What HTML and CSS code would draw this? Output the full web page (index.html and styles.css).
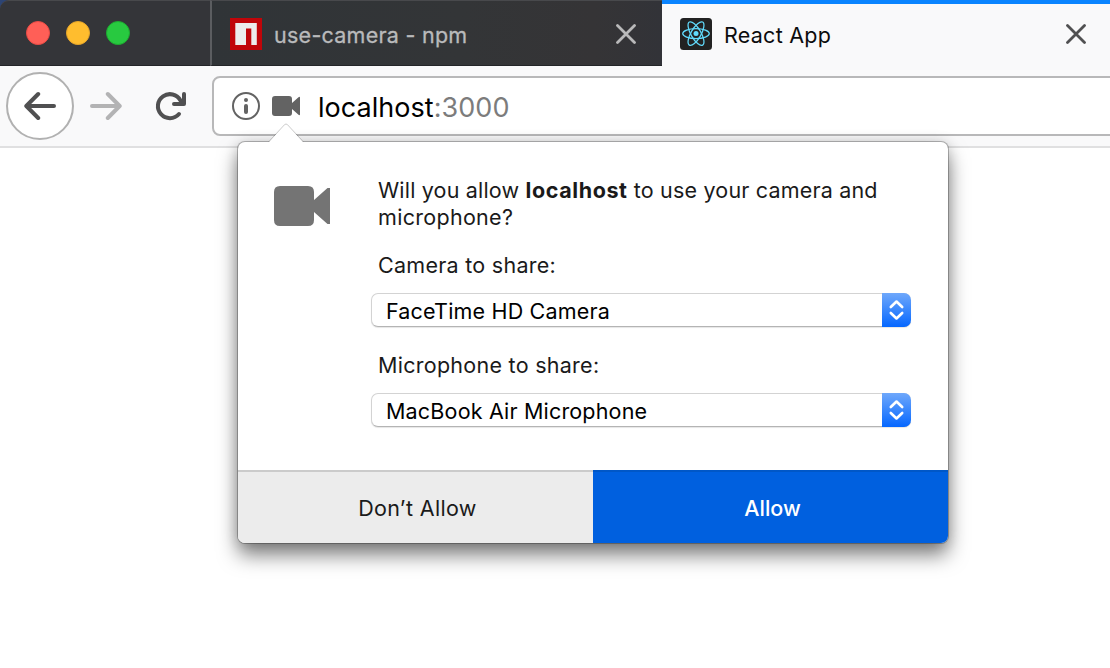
FILE: index.html
```html
<!DOCTYPE html>
<html lang="en">
<head>
<meta charset="utf-8">
<title>React App</title>
<link rel="stylesheet" href="styles.css">
</head>
<body>
<div class="browser">
  <header class="tab-strip">
    <div class="window-controls">
      <span class="dot dot-close"></span>
      <span class="dot dot-minimize"></span>
      <span class="dot dot-zoom"></span>
    </div>
    <div class="tab">
      <svg class="favicon" viewBox="0 0 32 32"><path fill="#c00509" d="M0 0h32v32H0z"/><path fill="#ececec" d="M5.300 5h21.500v22H21.300V10.500H16V27H5.300z"/></svg>
      <span class="tab-title title-npm">use-camera - npm</span>
      <svg class="tab-close" viewBox="0 0 20 20"><path d="M1.500 1.500l17 17M18.500 1.500l-17 17"/></svg>
    </div>
    <div class="tab tab-active">
      <svg class="favicon" viewBox="0 0 32 32"><rect width="32" height="32" rx="3.5" fill="#222"/><g fill="none" stroke="#61dafb" stroke-width="1.25"><ellipse cx="16" cy="15.6" rx="13.3" ry="5"/><ellipse cx="16" cy="15.6" rx="13.3" ry="5" transform="rotate(60 16 15.6)"/><ellipse cx="16" cy="15.6" rx="13.3" ry="5" transform="rotate(120 16 15.6)"/></g><circle cx="16" cy="15.6" r="2.5" fill="#61dafb"/></svg>
      <span class="tab-title title-react">React App</span>
      <svg class="tab-close" viewBox="0 0 20 20"><path d="M1.500 1.500l17 17M18.500 1.500l-17 17"/></svg>
    </div>
  </header>

  <nav class="toolbar">
    <span class="back">
      <svg class="icon" viewBox="0 0 32 32"><path d="M30 16H3M14.200 4L2.300 16 14.200 28"/></svg>
    </span>
    <svg class="icon forward" viewBox="0 0 32 32"><path d="M2 16h27M17.800 4L29.700 16 17.800 28"/></svg>
    <svg class="icon reload" viewBox="0 0 32 32"><path d="M25 24A12 12 0 1 1 26.500 10.500"/><path class="reload-head" d="M30 4V14H20"/><path class="reload-fill" d="M30 7V14H23z"/></svg>
    <div class="url-bar">
      <svg class="info" viewBox="0 0 28 28"><circle cx="14" cy="14" r="13" fill="none" stroke="#636363" stroke-width="2"/><circle cx="14" cy="8" r="2" fill="#636363"/><path d="M14 14v6" stroke="#636363" stroke-width="4" stroke-linecap="round"/></svg>
      <svg class="camera-small" viewBox="0 0 56 40"><path d="M6 0h28q6 0 6 6v8L53 2.500q3-2 3 1v33q0 3-3 1L40 26v8q0 6-6 6H6q-6 0-6-6V6q0-6 6-6z"/></svg>
      <span class="url">localhost<span class="port">:3000</span></span>
    </div>
  </nav>

  <section class="permission-popup">
    <svg class="popup-arrow" viewBox="0 0 36 20"><path d="M0 19h1L16.500 2q1.500-1.500 3 0L35 19h1v1H0z" fill="#fff"/><path d="M1 18.500L16.500 1.700q1.500-1.500 3 0L35 18.500" fill="none" stroke="#000" stroke-opacity=".2"/></svg>
    <div class="popup-body">
      <svg class="camera-large" viewBox="0 0 56 40"><path d="M6 0h28q6 0 6 6v8L53.500 2H56v36h-2.500L40 26v8q0 6-6 6H6q-6 0-6-6V6q0-6 6-6z"/></svg>
      <div class="popup-content">
        <p class="message">Will you allow <b>localhost</b> to use your camera and<br><span class="message-end">microphone?</span></p>
        <div class="label label-camera">Camera to share:</div>
        <div class="select">
          <span class="value value-camera">FaceTime HD Camera</span>
          <svg class="stepper" viewBox="0 0 29 34"><path d="M8.800 14l5.700-5.500L20.200 14M8.800 20l5.700 5.500L20.200 20"/></svg>
        </div>
        <div class="label label-mic">Microphone to share:</div>
        <div class="select">
          <span class="value value-mic">MacBook Air Microphone</span>
          <svg class="stepper" viewBox="0 0 29 34"><path d="M8.800 14l5.700-5.500L20.200 14M8.800 20l5.700 5.500L20.200 20"/></svg>
        </div>
      </div>
    </div>
    <div class="actions">
      <div class="action deny">Don’t Allow</div>
      <div class="action allow">Allow</div>
    </div>
  </section>
</div>
</body>
</html>
```
FILE: styles.css
```css
* { box-sizing: border-box; }

body {
  margin: 0;
  background: #fff;
  font-family: Inter, "Liberation Sans", sans-serif;
  font-size: 21.5px;
  color: #1a1a1a;
}

svg { display: block; flex: none; }

.browser {
  position: relative;
  width: 1110px;
  height: 668px;
  overflow: hidden;
  background: #fff;
}

/* Tabs */
.tab-strip {
  display: flex;
  height: 66px;
  background: #343539;
  border-top-left-radius: 9px;
  box-shadow: -5px -5px 0 #2c4474;
}
.window-controls {
  display: flex;
  gap: 16px;
  width: 210px;
  padding: 20px 0 0 26px;
  border-top: 1px solid #48494c;
  border-top-left-radius: 9px;
  border-bottom: 1px solid #242529;
}
.dot { width: 24px; height: 24px; border-radius: 50%; border: 1px solid; }
.dot-close { background: #ff5f57; border-color: #e94b45; }
.dot-minimize { background: #ffbd2e; border-color: #e5a52a; }
.dot-zoom { background: #28c940; border-color: #1cac2f; }
.tab {
  display: flex;
  align-items: flex-start;
  width: 452px;
  padding: 17px 26px 0 18px;
  border-left: 2px solid #5b5d60;
  border-top: 1px solid #48494c;
  border-bottom: 1px solid #232528;
  background: linear-gradient(90deg, #303437, #333537 55%, #353436 85%, #323338);
  color: #b9babb;
}
.tab-active {
  width: 448px;
  padding: 14px 24px 0 18px;
  border: 0;
  border-top: 4px solid #0a84ff;
  background: #f9f9fa;
  color: #0c0c0d;
}
.favicon { width: 32px; height: 32px; }
.tab-title { margin-left: 12px; line-height: 32px; padding-top: 1px; white-space: nowrap; letter-spacing: .26px; }
.title-npm { -webkit-text-stroke: .3px; }
.tab-close { width: 20px; height: 20px; margin: 6px 0 0 auto; }
.tab-close path { fill: none; stroke: #b9b9ba; stroke-width: 2.8; stroke-linecap: round; }
.tab-active .tab-close path { stroke: #505051; }

/* Navigation */
.toolbar {
  display: flex;
  align-items: flex-start;
  height: 82px;
  padding-left: 6px;
  background: #f9f9fa;
  border-bottom: 2px solid #e0e0e1;
}
.back {
  display: grid;
  place-items: center;
  width: 68px;
  height: 68px;
  margin-top: 6px;
  border: 2px solid #b1b1b1;
  border-radius: 50%;
  background: #fff;
}
.icon { width: 32px; height: 32px; }
.icon path { fill: none; stroke: #505051; stroke-width: 4; stroke-linecap: round; stroke-linejoin: round; }
.forward { margin: 24px 0 0 16px; }
.forward path { stroke: #b3b3b4; }
.reload { margin: 24px 0 0 32px; }
.icon .reload-fill { fill: #505051; stroke: none; }
.url-bar {
  display: flex;
  align-items: center;
  width: 906px;
  height: 60px;
  margin: 10px -10px 0 26px;
  padding-left: 18px;
  border: 2px solid #b8b8b9;
  border-radius: 8px;
  background: #fff;
}
.info { width: 28px; height: 28px; }
.camera-small { width: 28px; height: 20px; margin-left: 12px; fill: #636363; }
.url { margin-left: 18px; padding-top: 2px; font-size: 27px; color: #000; white-space: nowrap; letter-spacing: .04px; }
.port { color: #7c7c7c; }

/* Permission prompt */
.permission-popup {
  position: absolute;
  left: 238px;
  top: 142px;
  width: 710px;
  height: 401px;
  border-radius: 7px;
  background: #fff;
  box-shadow: 0 0 0 1px rgba(0, 0, 0, .25), 0 12px 20px rgba(0, 0, 0, .5), 0 0 14px rgba(0, 0, 0, .16);
}
.popup-arrow { position: absolute; left: 30px; top: -19px; width: 36px; height: 20px; }
.popup-body { display: flex; height: 328px; padding: 35px 37px 0 36px; }
.camera-large { width: 56px; height: 40px; margin-top: 9px; fill: #747474; }
.popup-content { width: 540px; margin-left: 41px; }
.message { margin: 0 0 0 7px; line-height: 27px; white-space: nowrap; letter-spacing: .18px; }
.message b { letter-spacing: .6px; }
.message-end { letter-spacing: .3px; }
.label { margin: 21px 0 0 7px; line-height: 27px; letter-spacing: .27px; }
.label-mic { margin-top: 25px; }
.select {
  display: flex;
  justify-content: space-between;
  width: 540px;
  height: 34px;
  margin-top: 14px;
  border: 1px solid #d3d3d3;
  border-bottom-color: #b4b4b4;
  border-right: 0;
  border-radius: 7px;
  background: #fff;
  box-shadow: 0 1px 1px rgba(0, 0, 0, .1);
}
.value { padding-left: 14px; line-height: 35px; color: #000; white-space: nowrap; letter-spacing: .18px; }
.stepper {
  width: 29px;
  height: 34px;
  margin-top: -1px;
  border-radius: 0 7px 7px 0;
  background: linear-gradient(#6fa8fb, #0567ff);
}
.stepper path { fill: none; stroke: #fff; stroke-width: 2.6; stroke-linecap: round; stroke-linejoin: round; }
.actions { display: flex; height: 73px; }
.action {
  width: 355px;
  padding-left: 4px;
  border-top: 2px solid #cbcbcb;
  line-height: 73px;
  text-align: center;
}
.deny { background: #ececec; border-bottom-left-radius: 7px; letter-spacing: .32px; }
.allow { background: #0060df; border-color: #0057c7; border-bottom-right-radius: 7px; color: #fff; font-weight: 500; }
```
